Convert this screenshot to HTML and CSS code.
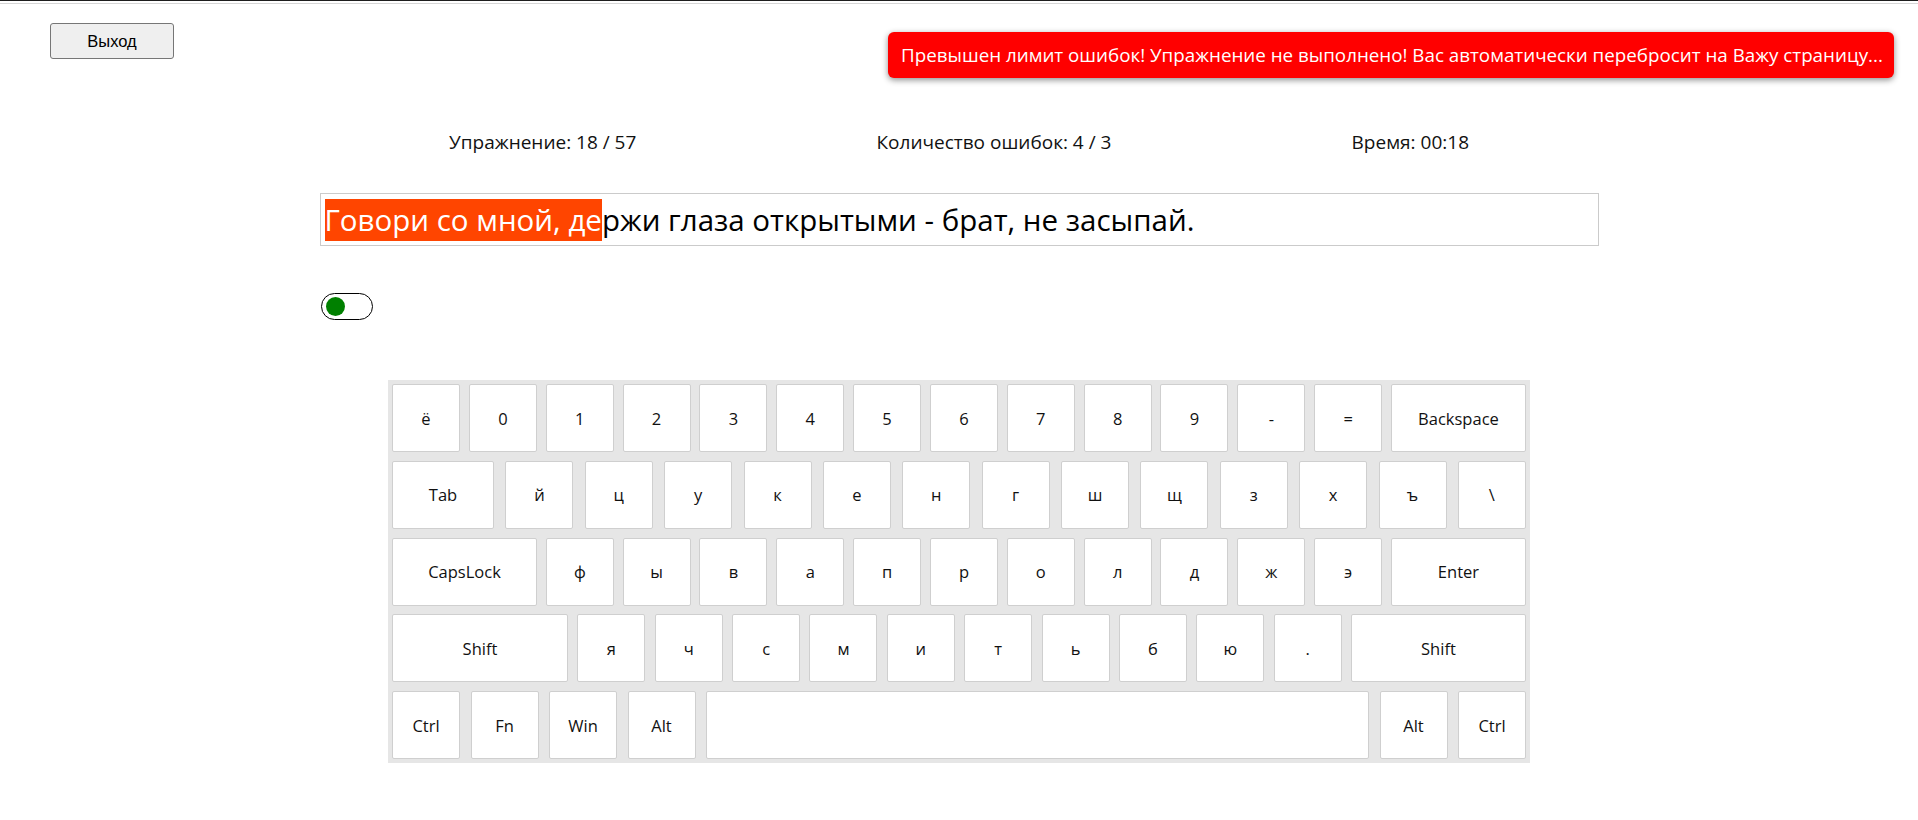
FILE: index.html
```html
<!DOCTYPE html>
<html lang="ru">
<head>
<meta charset="utf-8">
<title>Тренажёр</title>
<link rel="stylesheet" href="styles.css">
</head>
<body>
<div class="topbar"></div>
<div class="topline"></div>
<header class="header">
  <button class="exit-btn">Выход</button>
  <div class="alert">Превышен лимит ошибок! Упражнение не выполнено! Вас автоматически перебросит на Важу страницу...</div>
</header>
<section class="stats">
  <span class="stat">Упражнение: 18 / 57</span>
  <span class="stat">Количество ошибок: 4 / 3</span>
  <span class="stat">Время: 00:18</span>
</section>
<section class="text-box"><span class="done">Говори со мной, де</span><span class="rest">ржи глаза открытыми - брат, не засыпай.</span></section>
<div class="toggle-wrap"><div class="toggle"><div class="knob"></div></div></div>
<section class="keyboard">
  <div class="row">
    <div class="key">ё</div><div class="key">0</div><div class="key">1</div><div class="key">2</div><div class="key">3</div><div class="key">4</div><div class="key">5</div><div class="key">6</div><div class="key">7</div><div class="key">8</div><div class="key">9</div><div class="key">-</div><div class="key">=</div><div class="key w-back">Backspace</div>
  </div>
  <div class="row">
    <div class="key w-tab">Tab</div><div class="key">й</div><div class="key">ц</div><div class="key">у</div><div class="key">к</div><div class="key">е</div><div class="key">н</div><div class="key">г</div><div class="key">ш</div><div class="key">щ</div><div class="key">з</div><div class="key">х</div><div class="key">ъ</div><div class="key">\</div>
  </div>
  <div class="row">
    <div class="key w-caps">CapsLock</div><div class="key">ф</div><div class="key">ы</div><div class="key">в</div><div class="key">а</div><div class="key">п</div><div class="key">р</div><div class="key">о</div><div class="key">л</div><div class="key">д</div><div class="key">ж</div><div class="key">э</div><div class="key w-enter">Enter</div>
  </div>
  <div class="row">
    <div class="key w-lshift">Shift</div><div class="key">я</div><div class="key">ч</div><div class="key">с</div><div class="key">м</div><div class="key">и</div><div class="key">т</div><div class="key">ь</div><div class="key">б</div><div class="key">ю</div><div class="key">.</div><div class="key w-rshift">Shift</div>
  </div>
  <div class="row">
    <div class="key">Ctrl</div><div class="key">Fn</div><div class="key">Win</div><div class="key">Alt</div><div class="key w-space"></div><div class="key">Alt</div><div class="key">Ctrl</div>
  </div>
</section>
</body>
</html>
```
FILE: styles.css
```css
* { box-sizing: border-box; }
html, body { margin: 0; padding: 0; background: #fff; }
body {
  font-family: "Open Sans", "Noto Sans", sans-serif;
  color: #111;
  width: 1918px;
  min-height: 820px;
}
.topbar { height: 1px; background: #1e1e1e; }
.topline { height: 1px; background: #d6d6d6; margin-top: 2px; }

.header {
  position: relative;
  height: 55px;
  padding: 19px 0 0 50px;
}
.exit-btn {
  width: 124px;
  height: 36px;
  font-family: "Liberation Sans", Arial, sans-serif;
  font-size: 16.5px;
  color: #000;
  background: #efefef;
  border: 1px solid #767676;
  border-radius: 3px;
  padding: 0;
}
.alert {
  position: absolute;
  top: 28px;
  right: 24px;
  width: 1006px;
  height: 46px;
  background: #ff0000;
  color: #fff;
  border-radius: 6px;
  box-shadow: 0 2px 6px rgba(0,0,0,0.45);
  font-size: 18.8px;
  line-height: 46px;
  padding-left: 13px;
  white-space: nowrap;
  overflow: hidden;
}

.stats {
  width: 1280px;
  margin: 72px auto 0;
  padding: 0 130px;
  display: flex;
  justify-content: space-between;
  font-size: 19px;
  line-height: 22px;
  color: #111;
}

.text-box {
  width: 1279px;
  height: 53px;
  margin: 40px auto 0;
  border: 1px solid #cbcbcb;
  padding: 5px 4px 4px;
  font-size: 29.5px;
  line-height: 42px;
  white-space: nowrap;
  color: #000;
}
.done {
  display: inline-block;
  height: 42px;
  background: #ff4500;
  color: #fff;
}
.rest { display: inline-block; height: 42px; }

.toggle-wrap {
  width: 1279px;
  margin: 47px auto 0;
}
.toggle {
  width: 52px;
  height: 27px;
  margin-left: 1px;
  border: 1px solid #000;
  border-radius: 14px;
  background: #fff;
  display: flex;
  align-items: center;
  padding-left: 4px;
}
.knob {
  width: 19px;
  height: 19px;
  border-radius: 50%;
  background: #008000;
}

.keyboard {
  width: 1142px;
  margin: 60px auto 0;
  padding: 4px;
  background: #e6e6e6;
  display: flex;
  flex-direction: column;
  gap: 8.75px;
}
.row {
  display: flex;
  justify-content: space-between;
}
.key {
  width: 68px;
  height: 68px;
  background: #fff;
  border: 1px solid #cfcfcf;
  border-radius: 2px;
  display: flex;
  align-items: center;
  justify-content: center;
  font-size: 16.5px;
  color: #111;
}
.w-back { width: 135px; }
.w-tab { width: 102px; }
.w-caps { width: 145px; }
.w-enter { width: 135px; }
.w-lshift { width: 176px; }
.w-rshift { width: 175px; }
.w-space { width: 663px; }
```
